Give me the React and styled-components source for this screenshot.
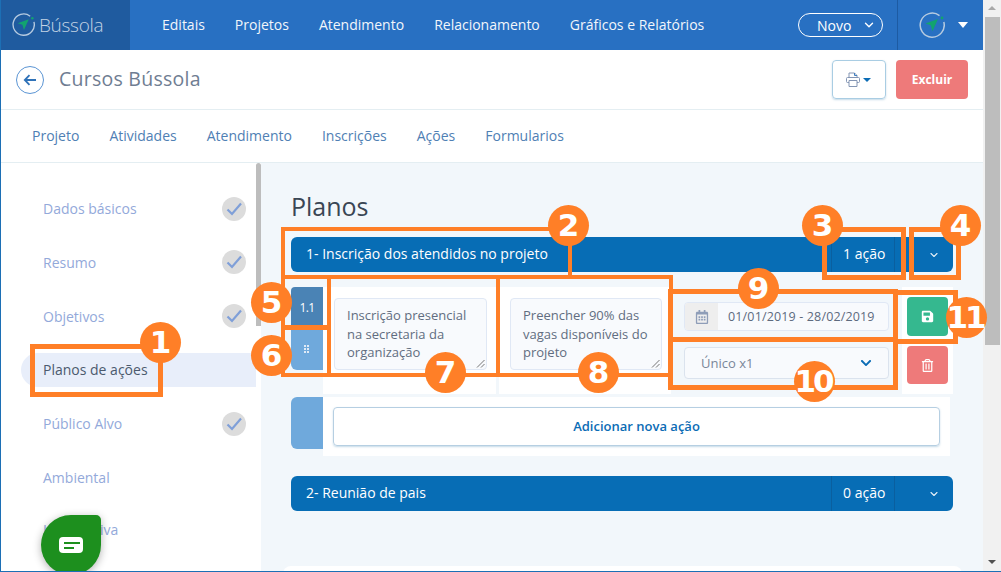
import React from "react";
import styled, { createGlobalStyle } from "styled-components";
import { ChevronDown } from "lucide-react";
import { FaRegCalendarAlt, FaSave, FaRegTrashAlt, FaChevronDown } from "react-icons/fa";

const NAV = ["Editais", "Projetos", "Atendimento", "Relacionamento", "Gráficos e Relatórios"];
const TABS = ["Projeto", "Atividades", "Atendimento", "Inscrições", "Ações", "Formularios"];
const STEPS = [
    { name: "Dados básicos", done: true },
    { name: "Resumo", done: true },
    { name: "Objetivos", done: true },
    { name: "Planos de ações", active: true },
    { name: "Público Alvo", done: true },
    { name: "Ambiental" },
    { name: "Informativa" },
];
const BOXES = [
    { x: 30, y: 344, w: 133, h: 53, t: 5 },
    { x: 281, y: 227, w: 291, h: 52, t: 4 },
    { x: 822, y: 227, w: 84, h: 53, t: 5 },
    { x: 909, y: 227, w: 52, h: 53, t: 5 },
    { x: 281, y: 275, w: 50, h: 54, t: 4 },
    { x: 281, y: 326, w: 50, h: 51, t: 4 },
    { x: 327, y: 275, w: 173, h: 102, t: 4 },
    { x: 496, y: 275, w: 177, h: 102, t: 4 },
    { x: 668, y: 289, w: 230, h: 53, t: 5 },
    { x: 668, y: 337, w: 230, h: 53, t: 5 },
    { x: 893, y: 290, w: 65, h: 54, t: 5 },
];
const BADGES = [
    { n: 1, x: 140, y: 322 },
    { n: 2, x: 548, y: 205 },
    { n: 3, x: 802, y: 205 },
    { n: 4, x: 940, y: 205 },
    { n: 5, x: 251, y: 282 },
    { n: 6, x: 251, y: 335 },
    { n: 7, x: 425, y: 352 },
    { n: 8, x: 578, y: 352 },
    { n: 9, x: 738, y: 268 },
    { n: 10, x: 794, y: 361 },
    { n: 11, x: 946, y: 297 },
];

const GlobalStyle = createGlobalStyle`
    html, body {
        margin: 0;
        background: #fff;
        font-family: "Open Sans", "Liberation Sans", sans-serif;
    }
    * {
        box-sizing: border-box;
    }
`;

const Screen = styled.div`
    position: relative;
    display: flex;
    width: 1001px;
    height: 572px;
    overflow: hidden;
`;

const Main = styled.div`
    position: relative;
    display: flex;
    flex-direction: column;
    width: 983px;
    height: 572px;
    border-left: 1px solid #1c6fb5;
    border-bottom: 1px solid #1c6fb5;
    overflow: hidden;
`;

const PageScroll = styled.div`
    position: relative;
    width: 18px;
    height: 572px;
    background: #f1f1f1;
    border-bottom: 1px solid #1c6fb5;
`;

const PageThumb = styled.div`
    position: absolute;
    left: 2px;
    top: 17px;
    width: 15px;
    height: 328px;
    background: #bdbdbd;
`;

const ScrollArrow = styled.div`
    position: absolute;
    left: 5px;
    width: 0;
    height: 0;
    border-left: 4px solid transparent;
    border-right: 4px solid transparent;
    ${(p) => (p.$up ? "top: 6px; border-bottom: 4px solid #a8a8a8;" : "bottom: 7px; border-top: 4px solid #505050;")}
`;

const TopBar = styled.header`
    display: flex;
    align-items: center;
    flex: 0 0 50px;
    background: #2870c2;
    color: #fff;
`;

const Brand = styled.div`
    display: flex;
    align-items: center;
    gap: 4px;
    width: 129px;
    height: 50px;
    padding: 0 0 1px 11px;
    background: #1f5b9f;
    color: #c3d3e4;
    font-size: 19px;
    font-weight: 300;
    letter-spacing: -0.3px;
`;

const Nav = styled.nav`
    display: flex;
    gap: 30px;
    margin-left: 32px;
    padding-bottom: 2px;
    font-size: 14px;
    color: #f2f6fb;
`;

const NewButton = styled.button`
    display: flex;
    align-items: center;
    justify-content: space-between;
    width: 85px;
    height: 24px;
    margin-left: auto;
    padding: 0 6px 0 18px;
    border: 1px solid #fff;
    border-radius: 12px;
    background: transparent;
    color: #fff;
    font: 500 14px "Open Sans", sans-serif;
`;

const UserArea = styled.div`
    display: flex;
    align-items: center;
    width: 86px;
    height: 50px;
    margin-left: 14px;
    padding-left: 21px;
    border-left: 1px solid #1d5ba3;
`;

const WhiteCaret = styled.span`
    width: 0;
    height: 0;
    margin-left: 13px;
    border-left: 5px solid transparent;
    border-right: 5px solid transparent;
    border-top: 6px solid #fff;
`;

const TitleBar = styled.div`
    display: flex;
    align-items: center;
    flex: 0 0 60px;
    padding: 0 15px;
    border-bottom: 1px solid #e4eef2;
`;

const BackButton = styled.div`
    display: flex;
    align-items: center;
    justify-content: center;
    width: 28px;
    height: 28px;
    border: 1px solid #5b95d4;
    border-radius: 50%;
`;

const PageTitle = styled.h1`
    margin: 0 0 2px 15px;
    font-size: 19.5px;
    font-weight: 400;
    color: #6f7d92;
    letter-spacing: 0.25px;
`;

const PrintButton = styled.div`
    display: flex;
    align-items: center;
    justify-content: center;
    gap: 3px;
    width: 54px;
    height: 39px;
    margin-left: auto;
    padding-right: 1px;
    border: 1px solid #a9cde3;
    border-radius: 4px;
    box-shadow: 0 1px 2px rgba(90, 150, 190, 0.35);
`;

const BlueCaret = styled.span`
    width: 0;
    height: 0;
    border-left: 4px solid transparent;
    border-right: 4px solid transparent;
    border-top: 4px solid #0b6cb5;
`;

const DangerButton = styled.div`
    display: flex;
    align-items: center;
    justify-content: center;
    width: 72px;
    height: 39px;
    margin-left: 10px;
    border-radius: 4px;
    background: #ee7a7a;
    color: #fff;
    font-size: 12px;
    font-weight: 700;
`;

const Tabs = styled.div`
    display: flex;
    align-items: center;
    gap: 30px;
    flex: 0 0 53px;
    padding: 0 0 2px 31px;
    border-bottom: 1px solid #e4eef2;
    font-size: 14px;
    color: #4f80b4;
`;

const Body = styled.div`
    display: flex;
    flex: 1;
    min-height: 0;
`;

const Sidebar = styled.aside`
    position: relative;
    display: flex;
    flex-direction: column;
    gap: 19.75px;
    flex: 0 0 260px;
    padding: 28.6px 5px 0 20px;
    background: #fff;
`;

const SideThumb = styled.div`
    position: absolute;
    right: 0;
    top: 0;
    width: 5px;
    height: 163px;
    border-radius: 3px 3px 0 0;
    background: #bdbdbd;
`;

const StepItem = styled.div`
    display: flex;
    align-items: center;
    justify-content: space-between;
    flex: 0 0 34px;
    padding: 0 10px 0 22px;
    border-radius: 17px 0 0 17px;
    background: ${(p) => (p.$active ? "#e8eefa" : "transparent")};
    color: ${(p) => (p.$active ? "#4b5a6e" : "#93a9da")};
    font-size: 14px;

    &:last-of-type {
        margin-top: -2px;
    }
`;

const CheckBadge = styled.span`
    display: flex;
    align-items: center;
    justify-content: center;
    width: 24px;
    height: 24px;
    border-radius: 50%;
    background: #dcdcdc;
`;

const Content = styled.main`
    flex: 1;
    min-width: 0;
    padding: 26px 30px 0;
    background: #f2f7fb;
    overflow: hidden;
`;

const SectionTitle = styled.h2`
    margin: 0 0 13px;
    font-size: 25px;
    line-height: 35px;
    font-weight: 400;
    color: #3a4654;
`;

const PlanBar = styled.div`
    display: flex;
    align-items: stretch;
    height: 35px;
    border-radius: 6px;
    background: #076db5;
    color: #fff;
    font-size: 14px;
    line-height: 33px;
`;

const PlanName = styled.div`
    flex: 1;
    padding-left: 15px;
`;

const PlanCount = styled.div`
    width: 64px;
    padding-left: 11px;
    border-left: 1px solid #0a5f9f;
    border-right: 1px solid #0a5f9f;
`;

const PlanToggle = styled.div`
    display: flex;
    align-items: center;
    justify-content: center;
    width: 58px;
    padding-left: 19px;
`;

const ActionRow = styled.div`
    display: flex;
    height: 107px;
    margin-top: 15px;
`;

const IndexColumn = styled.div`
    display: flex;
    flex-direction: column;
    flex: 0 0 32px;
    height: 83px;
`;

const IndexCell = styled.div`
    flex: 0 0 41px;
    display: flex;
    align-items: center;
    justify-content: center;
    border-radius: 4px 0 0 0;
    background: #4a83b5;
    color: #fff;
    font-size: 12px;
    letter-spacing: -0.6px;
`;

const GripCell = styled.div`
    flex: 0 0 42px;
    display: flex;
    align-items: center;
    justify-content: center;
    border-radius: 0 0 0 6px;
    background: #6fa9dc;
`;

const TextCard = styled.div`
    flex: 0 0 ${(p) => p.$w}px;
    margin-right: 3px;
    padding: 11px 9px 0 11px;
    background: #fff;
`;

const Note = styled.div`
    position: relative;
    height: 72px;
    padding: 7px 12px 0 12px;
    border: 1px solid #e0e8f5;
    border-radius: 4px;
    background: #f8fafd;
    color: #616d80;
    font-size: 13px;
    line-height: 18.5px;
`;

const Resizer = styled.svg`
    position: absolute;
    right: 1px;
    bottom: 1px;
`;

const FieldColumn = styled.div`
    display: flex;
    flex-direction: column;
    flex: 0 0 231px;
    padding: 15px 13px 0 13px;
    margin-left: -3px;
`;

const DateField = styled.div`
    display: flex;
    height: 29px;
    border: 1px solid #e0e8f5;
    border-radius: 4px;
    background: #f8fafd;
    overflow: hidden;
    color: #5d6a7e;
    font-size: 12.5px;
    line-height: 27px;
`;

const DateIcon = styled.div`
    display: flex;
    align-items: center;
    justify-content: center;
    flex: 0 0 33px;
    background: #eeeeee;
    color: #8e9db8;
`;

const DateText = styled.div`
    padding-left: 10px;
    letter-spacing: 0.15px;
`;

const SelectField = styled.div`
    display: flex;
    align-items: center;
    justify-content: space-between;
    height: 32px;
    margin-top: 16px;
    padding: 0 16px 0 16px;
    border: 1px solid #dbe3ee;
    border-radius: 4px;
    background: #f8fafd;
    color: #7a8799;
    font-size: 13px;
`;

const ButtonCard = styled.div`
    display: flex;
    flex-direction: column;
    align-items: center;
    gap: 10px;
    flex: 0 0 51px;
    padding-top: 10px;
    background: #fff;
`;

const SquareButton = styled.div`
    display: flex;
    align-items: center;
    justify-content: center;
    width: 41px;
    height: ${(p) => (p.$tone === "save" ? 39 : 38)}px;
    border-radius: 4px;
    background: ${(p) => (p.$tone === "save" ? "#35b88f" : "#ee7a7a")};
    color: #fff;
    font-size: 13px;
`;

const AddRow = styled.div`
    display: flex;
    margin-top: 3px;
    height: 59px;
`;

const AddTab = styled.div`
    flex: 0 0 32px;
    height: 52px;
    border-radius: 6px 0 0 6px;
    background: #6fa9dc;
`;

const AddCard = styled.div`
    flex: 0 0 627px;
    padding: 10px;
    background: #fff;
`;

const AddButton = styled.div`
    display: flex;
    align-items: center;
    justify-content: center;
    height: 39px;
    padding-bottom: 2px;
    border: 1px solid #b6cfe2;
    border-radius: 4px;
    box-shadow: 0 1px 2px rgba(90, 150, 190, 0.35);
    color: #0b6cb5;
    font-size: 13px;
    font-weight: 600;
`;

const SecondBar = styled(PlanBar)`
    margin-top: 20px;
`;

const BottomCard = styled.div`
    height: 40px;
    margin: 55px -9px 0 -8px;
    border-radius: 8px 8px 0 0;
    background: #fff;
`;

const ChatBubble = styled.div`
    position: absolute;
    left: 40px;
    top: 515px;
    display: flex;
    align-items: center;
    justify-content: center;
    width: 60px;
    height: 60px;
    border-radius: 30px 5px 30px 30px;
    background: #1d8f1e;
    box-shadow: 0 2px 8px rgba(0, 0, 0, 0.3);
`;

const MarkBox = styled.div`
    position: absolute;
    left: ${(p) => p.$x}px;
    top: ${(p) => p.$y}px;
    width: ${(p) => p.$w}px;
    height: ${(p) => p.$h}px;
    border: ${(p) => p.$t}px solid #ff7f27;
`;

const MarkBadge = styled.div`
    position: absolute;
    left: ${(p) => p.$x}px;
    top: ${(p) => p.$y}px;
    display: flex;
    align-items: center;
    justify-content: center;
    width: 41px;
    height: 41px;
    border-radius: 50%;
    background: #ff7f27;
    color: #fff;
    font: 700 31px/41px "DejaVu Sans", sans-serif;
    letter-spacing: ${(p) => (p.$wide ? "-3px" : "0")};
    padding-right: ${(p) => (p.$wide ? "3px" : "0")};
`;

const Compass = ({ size }) => (
    <svg width={size} height={size} viewBox="0 0 26 26" fill="none">
        <path d="M20.5 3.6A12 12 0 1 0 24.8 10" stroke="#b7cbe0" strokeWidth="1.5" />
        <path d="M19 7 6.5 11.5l5.2 1.8 1.8 6z" fill="#12a36f" />
        <circle cx="23" cy="6" r="1.4" fill="#12a36f" />
    </svg>
);

const PrinterIcon = () => (
    <svg width="14" height="15" viewBox="0 0 14 15" fill="none" stroke="#8496b4" strokeWidth="1">
        <path d="M3 5.5V1h5.5L11 3.5v2" />
        <path d="M8.5 1v2.5H11" stroke="#3f7fc0" />
        <path d="M3 10.5H1.5A1 1 0 0 1 .5 9.5V6.5a1 1 0 0 1 1-1h11a1 1 0 0 1 1 1v3a1 1 0 0 1-1 1H11" />
        <path d="M3 8.5h8v6H3z" />
    </svg>
);

const Check = () => (
    <svg width="18" height="16" viewBox="0 0 18 16" fill="none">
        <path d="M2.5 8.5 7 13 16 2.5" stroke="#7f9fd8" strokeWidth="2.2" />
    </svg>
);

const Grip = () => (
    <svg width="6" height="8" viewBox="0 0 6 8" fill="#dfeaf6">
        {[0, 3, 6].map((y) => (
            <React.Fragment key={y}>
                <rect x="0" y={y} width="2" height="2" />
                <rect x="3" y={y} width="2" height="2" />
            </React.Fragment>
        ))}
    </svg>
);

const ResizeHandle = () => (
    <Resizer width="9" height="9" viewBox="0 0 9 9" stroke="#666" strokeWidth="0.9">
        <path d="M1 8.5 8.5 1M5 8.5 8.5 5" />
    </Resizer>
);

const Plan = ({ name, count, Tag = PlanBar }) => (
    <Tag>
        <PlanName>{name}</PlanName>
        <PlanCount>{count}</PlanCount>
        <PlanToggle>
            <ChevronDown size={12} strokeWidth={2.2} color="#e6f0f8" />
        </PlanToggle>
    </Tag>
);

export default function App() {
    return (
        <Screen>
            <GlobalStyle />
            <Main>
                <TopBar>
                    <Brand>
                        <Compass size={23} />
                        Bússola
                    </Brand>
                    <Nav>
                        {NAV.map((item) => (
                            <span key={item}>{item}</span>
                        ))}
                    </Nav>
                    <NewButton>
                        Novo
                        <ChevronDown size={14} strokeWidth={2.4} />
                    </NewButton>
                    <UserArea>
                        <Compass size={26} />
                        <WhiteCaret />
                    </UserArea>
                </TopBar>
                <TitleBar>
                    <BackButton>
                        <svg width="14" height="14" viewBox="0 0 14 14" fill="none" stroke="#2f72b8" strokeWidth="1.8">
                            <path d="M13 7H2M6.5 2.2 1.8 7l4.7 4.8" />
                        </svg>
                    </BackButton>
                    <PageTitle>Cursos Bússola</PageTitle>
                    <PrintButton>
                        <PrinterIcon />
                        <BlueCaret />
                    </PrintButton>
                    <DangerButton>Excluir</DangerButton>
                </TitleBar>
                <Tabs>
                    {TABS.map((tab) => (
                        <span key={tab}>{tab}</span>
                    ))}
                </Tabs>
                <Body>
                    <Sidebar>
                        <SideThumb />
                        {STEPS.map((step) => (
                            <StepItem key={step.name} $active={step.active}>
                                {step.name}
                                {step.done && (
                                    <CheckBadge>
                                        <Check />
                                    </CheckBadge>
                                )}
                            </StepItem>
                        ))}
                    </Sidebar>
                    <Content>
                        <SectionTitle>Planos</SectionTitle>
                        <Plan name="1- Inscrição dos atendidos no projeto" count="1 ação" />
                        <ActionRow>
                            <IndexColumn>
                                <IndexCell>1.1</IndexCell>
                                <GripCell>
                                    <Grip />
                                </GripCell>
                            </IndexColumn>
                            <TextCard $w={173}>
                                <Note>
                                    Inscrição presencial na secretaria da organização
                                    <ResizeHandle />
                                </Note>
                            </TextCard>
                            <TextCard $w={172}>
                                <Note>
                                    Preencher 90% das vagas disponíveis do projeto
                                    <ResizeHandle />
                                </Note>
                            </TextCard>
                            <FieldColumn>
                                <DateField>
                                    <DateIcon>
                                        <FaRegCalendarAlt size={14} />
                                    </DateIcon>
                                    <DateText>01/01/2019 - 28/02/2019</DateText>
                                </DateField>
                                <SelectField>
                                    Único x1
                                    <FaChevronDown size={12} color="#0b6cb5" />
                                </SelectField>
                            </FieldColumn>
                            <ButtonCard>
                                <SquareButton $tone="save">
                                    <FaSave />
                                </SquareButton>
                                <SquareButton>
                                    <FaRegTrashAlt />
                                </SquareButton>
                            </ButtonCard>
                        </ActionRow>
                        <AddRow>
                            <AddTab />
                            <AddCard>
                                <AddButton>Adicionar nova ação</AddButton>
                            </AddCard>
                        </AddRow>
                        <Plan name="2- Reunião de pais" count="0 ação" Tag={SecondBar} />
                        <BottomCard />
                    </Content>
                </Body>
                <ChatBubble>
                    <svg width="24" height="16" viewBox="0 0 24 16">
                        <rect width="24" height="16" rx="4" fill="#fff" />
                        <path d="M5 6h16M5 11h10" stroke="#1d8f1e" strokeWidth="1.8" />
                    </svg>
                </ChatBubble>
            </Main>
            <PageScroll>
                <ScrollArrow $up />
                <PageThumb />
                <ScrollArrow />
            </PageScroll>
            {BOXES.map((b) => (
                <MarkBox key={`${b.x}-${b.y}`} $x={b.x} $y={b.y} $w={b.w} $h={b.h} $t={b.t} />
            ))}
            {BADGES.map((b) => (
                <MarkBadge key={b.n} $x={b.x} $y={b.y} $wide={b.n > 9}>
                    {b.n}
                </MarkBadge>
            ))}
        </Screen>
    );
}
